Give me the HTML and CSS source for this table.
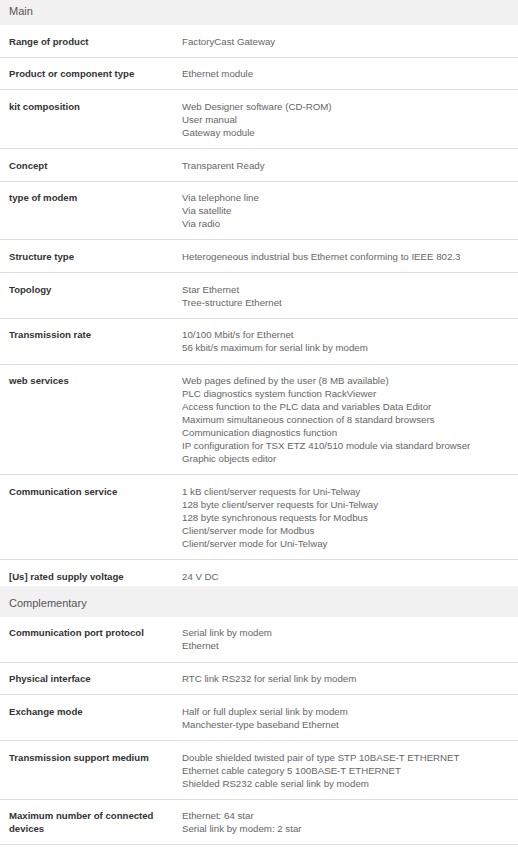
FILE: index.html
```html
<!DOCTYPE html>
<html lang="en">
<head>
<meta charset="utf-8">
<title>Characteristics</title>
<link rel="stylesheet" href="styles.css">
</head>
<body>
<div class="sheet">
  <section class="group">
    <h2 class="group-title">Main</h2>
    <div class="row"><div class="label">Range of product</div><div class="value">FactoryCast Gateway</div></div>
    <div class="row"><div class="label">Product or component type</div><div class="value">Ethernet module</div></div>
    <div class="row"><div class="label">kit composition</div><div class="value">Web Designer software (CD-ROM)<br>User manual<br>Gateway module</div></div>
    <div class="row"><div class="label">Concept</div><div class="value">Transparent Ready</div></div>
    <div class="row"><div class="label">type of modem</div><div class="value">Via telephone line<br>Via satellite<br>Via radio</div></div>
    <div class="row"><div class="label">Structure type</div><div class="value">Heterogeneous industrial bus Ethernet conforming to IEEE 802.3</div></div>
    <div class="row"><div class="label">Topology</div><div class="value">Star Ethernet<br>Tree-structure Ethernet</div></div>
    <div class="row"><div class="label">Transmission rate</div><div class="value">10/100 Mbit/s for Ethernet<br>56 kbit/s maximum for serial link by modem</div></div>
    <div class="row"><div class="label">web services</div><div class="value">Web pages defined by the user (8 MB available)<br>PLC diagnostics system function RackViewer<br>Access function to the PLC data and variables Data Editor<br>Maximum simultaneous connection of 8 standard browsers<br>Communication diagnostics function<br>IP configuration for TSX ETZ 410/510 module via standard browser<br>Graphic objects editor</div></div>
    <div class="row"><div class="label">Communication service</div><div class="value">1 kB client/server requests for Uni-Telway<br>128 byte client/server requests for Uni-Telway<br>128 byte synchronous requests for Modbus<br>Client/server mode for Modbus<br>Client/server mode for Uni-Telway</div></div>
    <div class="row row-last"><div class="label">[Us] rated supply voltage</div><div class="value">24 V DC</div></div>
  </section>
  <section class="group">
    <h2 class="group-title">Complementary</h2>
    <div class="row"><div class="label">Communication port protocol</div><div class="value">Serial link by modem<br>Ethernet</div></div>
    <div class="row"><div class="label">Physical interface</div><div class="value">RTC link RS232 for serial link by modem</div></div>
    <div class="row"><div class="label">Exchange mode</div><div class="value">Half or full duplex serial link by modem<br>Manchester-type baseband Ethernet</div></div>
    <div class="row"><div class="label">Transmission support medium</div><div class="value">Double shielded twisted pair of type STP 10BASE-T ETHERNET<br>Ethernet cable category 5 100BASE-T ETHERNET<br>Shielded RS232 cable serial link by modem</div></div>
    <div class="row"><div class="label">Maximum number of connected devices</div><div class="value">Ethernet: 64 star<br>Serial link by modem: 2 star</div></div>
  </section>
</div>
</body>
</html>
```

FILE: styles.css
```css
html, body {
  margin: 0;
  padding: 0;
  background: #ffffff;
}

body {
  font-family: "Liberation Sans", Arial, sans-serif;
  overflow: hidden;
}

.sheet {
  margin-top: -6px;
}

.group-title {
  margin: 0;
  box-sizing: border-box;
  height: 31px;
  padding: 3px 9px 0;
  display: flex;
  align-items: center;
  background: #f1f1f1;
  font-size: 11px;
  font-weight: normal;
  color: #555555;
}

.row {
  display: grid;
  grid-template-columns: 182px 1fr;
  padding: 9.6px 0 9.1px;
  border-bottom: 1px solid #dedede;
  line-height: 13px;
}

.row-last {
  border-bottom: none;
  padding-top: 10px;
  padding-bottom: 3px;
}

.label {
  padding: 0 14px 0 9px;
  font-size: 9.6px;
  font-weight: bold;
  color: #333333;
}

.value {
  padding-right: 9px;
  font-size: 9.7px;
  color: #666666;
}
```
